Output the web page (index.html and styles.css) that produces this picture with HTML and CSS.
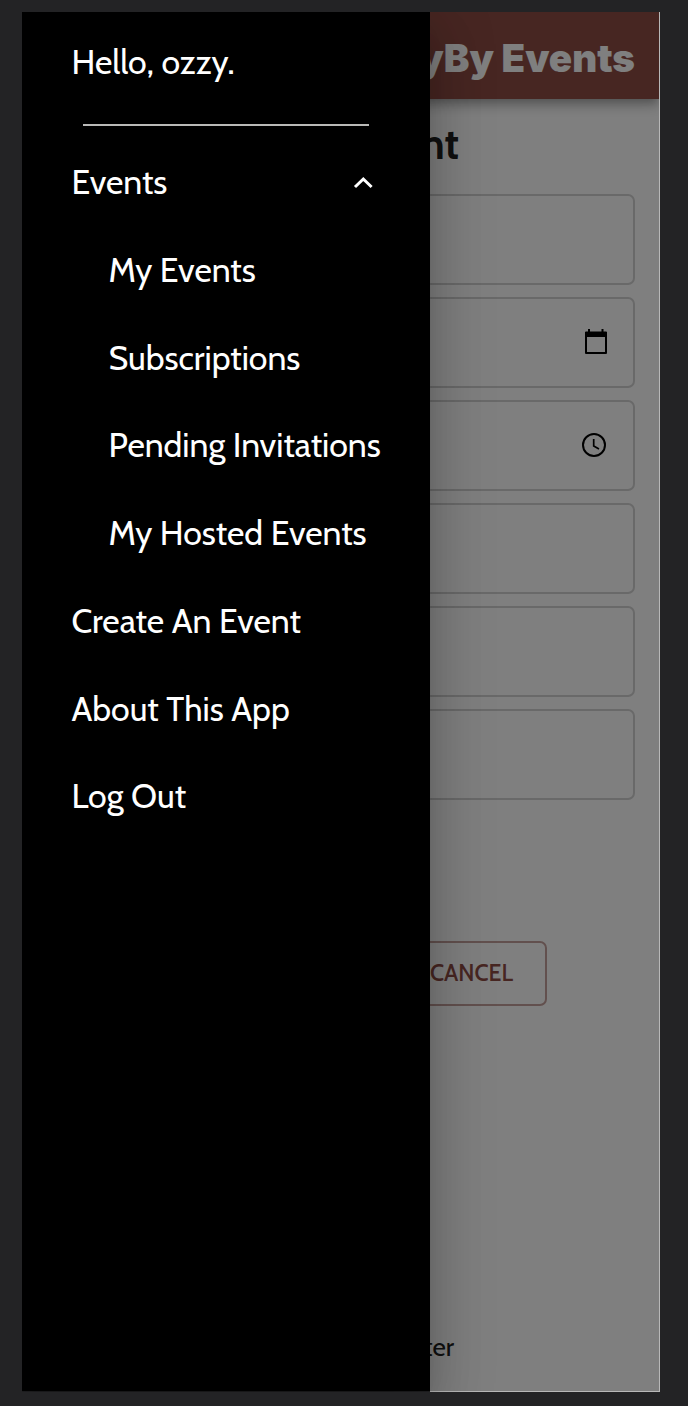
FILE: index.html
```html
<!DOCTYPE html>
<html lang="en">
<head>
<meta charset="utf-8">
<title>FlyBy Events</title>
<link rel="stylesheet" href="styles.css">
</head>
<body>
<div class="device">
  <main class="app">
    <header class="app-bar"><span class="brand">FlyBy Events</span></header>
    <h1 class="title">Create Event</h1>
    <form class="fields">
      <div class="field"></div>
      <div class="field">
        <svg class="icon-date" viewBox="0 0 24 26"><path d="M1 3h22v5H1z"/><path d="M4 0h2v3H4zM17.500 0h2v3h-2z"/><path d="M2 3.500h20v20.500H2z" fill="none" stroke="#000" stroke-width="2" stroke-linejoin="round"/></svg>
      </div>
      <div class="field">
        <svg class="icon-time" viewBox="0 0 24 24"><circle cx="12" cy="12" r="11" fill="none" stroke="#000" stroke-width="2"/><path d="M11.700 6v7l5.300 3" fill="none" stroke="#000" stroke-width="1.700"/></svg>
      </div>
      <div class="field"></div>
      <div class="field"></div>
      <div class="field"></div>
    </form>
    <div class="actions"><button class="cancel">CANCEL</button></div>
    <footer class="footer">Footer</footer>
  </main>
  <div class="backdrop"></div>
  <nav class="drawer">
    <div class="item"><span>Hello, ozzy.</span></div>
    <hr class="divider">
    <div class="item"><span>Events</span>
      <svg class="chevron" viewBox="0 0 20 14"><path d="M2 12 10.300 4l8.300 8" fill="none" stroke="#fff" stroke-width="3"/></svg>
    </div>
    <div class="item sub"><span>My Events</span></div>
    <div class="item sub"><span>Subscriptions</span></div>
    <div class="item sub"><span>Pending Invitations</span></div>
    <div class="item sub"><span>My Hosted Events</span></div>
    <div class="item"><span>Create An Event</span></div>
    <div class="item"><span>About This App</span></div>
    <div class="item"><span>Log Out</span></div>
  </nav>
</div>
</body>
</html>
```
FILE: styles.css
```css
* { box-sizing: border-box; }
body {
  margin: 0;
  height: 1406px;
  padding: 12px 28px 14px 22px;
  background: #232325;
  font-family: Cabin, Lato, sans-serif;
  overflow: hidden;
}
.device { position: relative; width: 638px; height: 1380px; overflow: hidden; background: linear-gradient(90deg, #232325 408px, #b8b8b8 408px); }
.app { display: flex; flex-direction: column; width: 637px; height: 1379px; background: #fff; overflow: hidden; }
.app-bar {
  flex: none; height: 87px; display: flex; align-items: center; justify-content: flex-end;
  padding: 4px 24px 0 0; background: #8e4c45; color: #fff;
  box-shadow: 0 4px 8px -2px rgba(0,0,0,.2), 0 8px 10px rgba(0,0,0,.14), 0 2px 20px rgba(0,0,0,.12);
}
.brand { font-family: Inter, Lato, sans-serif; font-size: 38.500px; font-weight: 900; white-space: nowrap; letter-spacing: 0; }
.title { margin: 0; height: 94.500px; padding: 17px 200px 0 0; text-align: right; font-size: 42px; line-height: 56px; font-weight: 700; color: #212121; }
.fields { display: grid; gap: 12px; padding: 0 24px 0 25px; }
.field { height: 91px; border: 2px solid #d2d2d2; border-radius: 7px; display: flex; align-items: center; justify-content: flex-end; }
.icon-date { width: 24px; height: 26px; margin: 0 25px 1px 0; }
.icon-time { width: 24px; height: 24px; margin: 0 27px 1px 0; }
.actions { display: flex; justify-content: flex-end; padding: 141px 112px 0 0; }
.cancel { width: 150px; height: 65px; border: 2px solid #c5a09c; border-radius: 7px; background: none; padding: 0 32px 0 0; text-align: right; font: 500 23px Cabin, Lato, sans-serif; color: #8e4c45; }
.footer { margin-top: auto; padding: 0 205px 27px 0; text-align: right; font-size: 26px; line-height: 34px; color: #212121; }
.backdrop { position: absolute; top: 0; left: 0; width: 637px; height: 1379px; background: rgba(0,0,0,.5); }
.drawer {
  position: absolute; top: 0; left: 0; width: 408px; height: 1379px; padding-top: 6px; background: #000; color: #fff;
  box-shadow: 0 16px 20px -10px rgba(0,0,0,.2), 0 32px 48px 4px rgba(0,0,0,.14), 0 12px 60px 10px rgba(0,0,0,.12);
}
.item { display: flex; align-items: center; justify-content: space-between; height: 87.750px; padding: 0 57px 0 49.500px; font-size: 33.800px; white-space: nowrap; }
.sub { padding: 0 0 0 86.500px; }
.divider { width: 286px; height: 2px; margin: 18.500px 0 11.400px 61.400px; border: 0; background: #b9b9b7; }
.chevron { width: 20px; height: 14px; }
```
